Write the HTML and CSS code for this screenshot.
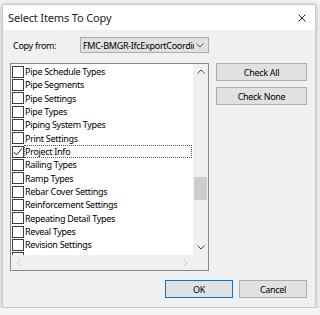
FILE: index.html
```html
<!DOCTYPE html>
<html lang="en">
  <head>
    <meta charset="UTF-8" />
    <title>Select Items To Copy</title>
    <link rel="stylesheet" href="styles.css">
  </head>
  <body>
    <div class="dialog">
      <div class="titlebar">
        <span class="title">Select Items To Copy</span>
        <svg class="close" width="8" height="8" viewBox="0 0 8 8"><path d="M0.5 0.5L7.5 7.5M7.5 0.5L0.5 7.5" stroke="#222" stroke-width="1"/></svg>
      </div>
      <div class="content">
        <div class="fromrow">
          <span class="label">Copy from:</span>
          <div class="combo">
            <span class="combotext">FMC-BMGR-IfcExportCoordination</span>
            <svg width="8" height="5" viewBox="0 0 8 5"><path d="M0.5 0.5L4 4L7.5 0.5" fill="none" stroke="#555"/></svg>
          </div>
        </div>
        <div class="main">
          <div class="listbox">
            <div class="items">
              <div class="item"><span class="box"></span><span class="text">Pipe Schedule Types</span></div>
              <div class="item"><span class="box"></span><span class="text">Pipe Segments</span></div>
              <div class="item"><span class="box"></span><span class="text">Pipe Settings</span></div>
              <div class="item"><span class="box"></span><span class="text">Pipe Types</span></div>
              <div class="item"><span class="box"></span><span class="text">Piping System Types</span></div>
              <div class="item"><span class="box"></span><span class="text">Print Settings</span></div>
              <div class="item focused"><span class="box"><svg width="10" height="10" viewBox="0 0 10 10"><path d="M1 5L3.5 8L9 1.5" fill="none" stroke="#222" stroke-width="1"/></svg></span><span class="text">Project Info</span></div>
              <div class="item"><span class="box"></span><span class="text">Railing Types</span></div>
              <div class="item"><span class="box"></span><span class="text">Ramp Types</span></div>
              <div class="item"><span class="box"></span><span class="text">Rebar Cover Settings</span></div>
              <div class="item"><span class="box"></span><span class="text">Reinforcement Settings</span></div>
              <div class="item"><span class="box"></span><span class="text">Repeating Detail Types</span></div>
              <div class="item"><span class="box"></span><span class="text">Reveal Types</span></div>
              <div class="item"><span class="box"></span><span class="text">Revision Settings</span></div>
              <div class="item"><span class="box"></span><span class="text">Roof Soffit Settings</span></div>
            </div>
            <div class="vscroll">
              <div class="arrow"><svg width="8" height="5" viewBox="0 0 8 5"><path d="M0.5 4.5L4 1L7.5 4.5" fill="none" stroke="#444"/></svg></div>
              <div class="track"><div class="thumb"></div></div>
              <div class="arrow"><svg width="8" height="5" viewBox="0 0 8 5"><path d="M0.5 0.5L4 4L7.5 0.5" fill="none" stroke="#444"/></svg></div>
            </div>
            <div class="hscroll">
              <div class="arrow"><svg width="5" height="8" viewBox="0 0 5 8"><path d="M4.5 0.5L1 4L4.5 7.5" fill="none" stroke="#c4c4c4"/></svg></div>
              <div class="arrow"><svg width="5" height="8" viewBox="0 0 5 8"><path d="M0.5 0.5L4 4L0.5 7.5" fill="none" stroke="#c4c4c4"/></svg></div>
            </div>
            <div class="corner"></div>
          </div>
          <div class="side">
            <button>Check All</button>
            <button>Check None</button>
          </div>
        </div>
        <div class="footer">
          <button class="default">OK</button>
          <button>Cancel</button>
        </div>
      </div>
    </div>
  </body>
</html>
```

FILE: styles.css
```css
* { box-sizing: border-box; }
body { margin: 0; padding: 4px 4px 0 2px; background: #f4f4f4; font-family: 'Noto Sans', sans-serif; color: #000; }

.dialog {
  width: 314px;
  height: 304px;
  background: #f0f0f0;
  border: 1px solid #c8c8c8;
  box-shadow: 0 1px 6px rgba(0,0,0,.25);
  display: flex;
  flex-direction: column;
}

.titlebar {
  height: 25px;
  background: white;
  display: flex;
  align-items: center;
  justify-content: space-between;
  padding: 0 9px 0 5px;
}
.title { font-size: 11px; letter-spacing: -0.15px; color: #222; }

.content { flex: 1; padding: 7px 8px 0 7px; display: flex; flex-direction: column; letter-spacing: -0.3px; }

.fromrow { display: flex; align-items: center; height: 16px; }
.label { width: 70px; padding-left: 3px; font-size: 9px; }
.combo {
  width: 129px;
  height: 16px;
  background: #e1e1e1;
  border: 1px solid #adadad;
  display: flex;
  align-items: center;
  padding: 0 4px 0 2px;
  gap: 2px;
}
.combotext { flex: 1; overflow: hidden; white-space: nowrap; font-size: 9px; }

.main { display: flex; gap: 7px; margin-top: 10px; }

.listbox {
  width: 199px;
  height: 208px;
  border: 1px solid #828790;
  background: white;
  display: grid;
  grid-template-columns: 1fr 15px;
  grid-template-rows: 1fr 15px;
}
.items { padding: 1px 0 0 1px; overflow: hidden; }
.item { display: flex; align-items: center; height: 13.33px; font-size: 9px; }
.box {
  width: 12px;
  height: 12px;
  border: 1px solid #3c3c3c;
  background: white;
  flex: none;
  display: flex;
  align-items: center;
  justify-content: center;
}
.text { padding-left: 1px; white-space: nowrap; }
.item.focused .text { flex: 1; margin-right: 1px; outline: 1px dotted #555; outline-offset: -1px; height: 13px; line-height: 13px; }

.vscroll { background: #f0f0f0; display: flex; flex-direction: column; }
.arrow { height: 15px; display: flex; align-items: center; justify-content: center; flex: none; }
.track { flex: 1; }
.thumb { width: 13px; margin: 98px auto 0; height: 23px; background: #cdcdcd; }
.hscroll { background: #f0f0f0; display: flex; justify-content: space-between; }
.hscroll .arrow { width: 15px; }
.corner { background: #f0f0f0; }

.side { display: flex; flex-direction: column; gap: 6px; }
button {
  font-family: 'Noto Sans', sans-serif;
  font-size: 9px;
  letter-spacing: -0.3px;
  color: #000;
  background: #e1e1e1;
  border: 1px solid #adadad;
  padding: 0;
}
.side button { width: 91px; height: 18px; }

.footer { display: flex; justify-content: flex-end; gap: 6px; margin-top: 9px; }
.footer button { width: 68px; height: 18px; }
.footer button.default { border-color: #0078d7; }
```
